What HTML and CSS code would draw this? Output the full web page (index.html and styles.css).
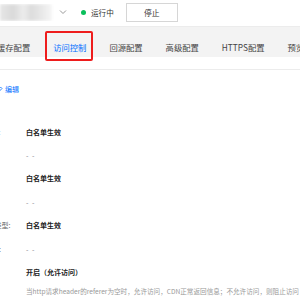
FILE: index.html
```html
<!DOCTYPE html>
<html lang="zh-CN">
<head>
    <meta charset="UTF-8">
    <title>访问控制</title>
    <link rel="stylesheet" href="styles.css">
</head>
<body>
    <div class="page">
        <div class="topbar">
            <div class="domain"><span class="blur"></span></div>
            <svg class="chevron" width="8" height="6" viewBox="0 0 8 6"><path d="M1 1.5 L4 4.5 L7 1.5" fill="none" stroke="#999" stroke-width="1"/></svg>
            <span class="dot"></span>
            <span class="status">运行中</span>
            <button class="stop">停止</button>
        </div>

        <div class="tabs">
            <span class="tab">缓存配置</span>
            <span class="tab active">访问控制</span>
            <span class="tab">回源配置</span>
            <span class="tab">高级配置</span>
            <span class="tab">HTTPS配置</span>
            <span class="tab">预览配置</span>
        </div>
        <div class="divider"></div>

        <div class="content">
            <div class="edit">
                <svg width="7" height="7" viewBox="0 0 7 7"><path d="M1 6 L1 4.5 L4.5 1 L6 2.5 L2.5 6 Z" fill="none" stroke="#006eff" stroke-width="0.8"/></svg>
                <a class="edit-link">编辑</a>
            </div>
            <div class="subtitle">IP黑白名单配置</div>
            <div class="row"><span class="label">IP黑白名单状态:</span><span class="value">白名单生效</span></div>
            <div class="row"><span class="label">名单内容</span><span class="value dash">- -</span></div>
            <div class="row"><span class="label">类型</span><span class="value">白名单生效</span></div>
            <div class="row"><span class="label">内容</span><span class="value dash">- -</span></div>
            <div class="row"><span class="label">Referer防盗链类型:</span><span class="value">白名单生效</span></div>
            <div class="row"><span class="label">防盗链名单内容:</span><span class="value dash">- -</span></div>
            <div class="row"><span class="label">空</span><span class="value">开启（允许访问）</span></div>
            <div class="desc">当http请求header的referer为空时，允许访问，CDN正常返回信息；不允许访问，则阻止访问</div>
        </div>
    </div>
</body>
</html>
```

FILE: styles.css
```css
body {
    margin: 0;
    font-family: "Noto Sans CJK SC", "Liberation Sans", sans-serif;
    background-color: white;
    color: #333;
    overflow: hidden;
}
.page {
    width: 300px;
    height: 300px;
    overflow: hidden;
}
.topbar {
    height: 27px;
    display: flex;
    align-items: center;
    border-bottom: 1px solid #ececec;
    box-sizing: border-box;
}
.domain {
    width: 54px;
    height: 17px;
    overflow: hidden;
    margin-top: -2px;
}
.blur {
    display: block;
    width: 52px;
    height: 17px;
    background: linear-gradient(90deg, #e6e6e6 0%, #d9d9d9 25%, #ececec 45%, #dcdcdc 60%, #e8e8e8 80%, #f6f6f6 100%);
    filter: blur(1.5px);
}
.chevron {
    margin-left: 5px;
    margin-top: -2px;
}
.dot {
    width: 5px;
    height: 5px;
    border-radius: 50%;
    background-color: #0abf5b;
    margin-left: 14px;
    margin-top: -1px;
}
.status {
    font-size: 7.6px;
    color: #333;
    margin-left: 5px;
    margin-top: -2px;
}
.stop {
    margin-left: 12px;
    width: 52px;
    height: 19px;
    margin-top: -1px;
    border: 1px solid #d6d6d6;
    background-color: white;
    font-family: inherit;
    font-size: 7.8px;
    color: #333;
    padding: 0;
}
.tabs {
    height: 30px;
    background-color: #f3f3f3;
    display: flex;
    align-items: center;
    gap: 23px;
    margin-left: -3px;
    padding-top: 9px;
    box-sizing: border-box;
    white-space: nowrap;
}
.tab {
    font-size: 8.3px;
    color: #444;
    position: relative;
}
.tab.active {
    color: #006eff;
}
.tab.active::after {
    content: "";
    position: absolute;
    left: -8px;
    right: -7px;
    top: -10px;
    bottom: -8px;
    border: 2px solid #ee1c1c;
    border-radius: 2px;
}
.divider {
    height: 12px;
    border-bottom: 1px solid #ececec;
}
.content {
    padding-top: 12px;
    margin-left: -50px;
}
.edit {
    height: 14px;
    display: flex;
    align-items: center;
    margin-left: 46px;
    gap: 2px;
}
.edit-link {
    font-size: 7px;
    color: #006eff;
}
.subtitle {
    height: 14px;
    line-height: 14px;
    margin-top: 10px;
    font-size: 7px;
    color: #666;
    margin-left: -12px;
}
.row {
    height: 23.4px;
    display: flex;
    align-items: center;
}
.label {
    width: 76px;
    flex: none;
    font-size: 7px;
    color: #666;
    white-space: nowrap;
}
.value {
    font-size: 7px;
    font-weight: bold;
    color: #222;
}
.value.dash {
    font-weight: normal;
    color: #888;
    letter-spacing: 1px;
}
.desc {
    height: 14px;
    line-height: 14px;
    margin-left: 76px;
    font-size: 6.6px;
    color: #999;
    white-space: nowrap;
}
```
